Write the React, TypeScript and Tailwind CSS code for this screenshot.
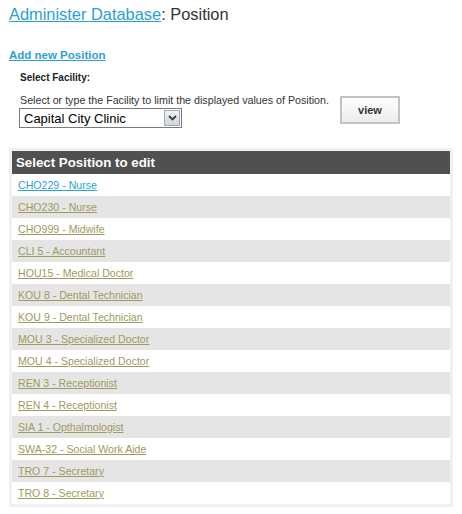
const positions = [
  "CHO229 - Nurse",
  "CHO230 - Nurse",
  "CHO999 - Midwife",
  "CLI 5 - Accountant",
  "HOU15 - Medical Doctor",
  "KOU 8 - Dental Technician",
  "KOU 9 - Dental Technician",
  "MOU 3 - Specialized Doctor",
  "MOU 4 - Specialized Doctor",
  "REN 3 - Receptionist",
  "REN 4 - Receptionist",
  "SIA 1 - Opthalmologist",
  "SWA-32 - Social Work Aide",
  "TRO 7 - Secretary",
  "TRO 8 - Secretary",
];

function FacilitySelect() {
  return (
    <div className="flex h-[20px] w-[163px] items-center border border-[#7a7a7a] bg-white pl-[4px] pr-[1px]">
      <span className="flex-1 text-[13px] leading-none text-black">Capital City Clinic</span>
      <span className="flex h-[16px] w-[16px] items-center justify-center border border-[#a5a9b4] bg-gradient-to-b from-[#f2f3f6] to-[#cfd3dc]">
        <svg width="9" height="6" viewBox="0 0 9 6">
          <path d="M1 1 L4.5 4.5 L8 1" fill="none" stroke="#3d3d3d" strokeWidth="1.8" />
        </svg>
      </span>
    </div>
  );
}

export default function App() {
  return (
    <div className="min-h-[514px] bg-white px-[9px] pt-[4px] font-['Liberation_Sans',Arial,sans-serif] text-[#333]">
      {/* Page title */}
      <h1 className="text-[16.4px] leading-[20px]">
        <a href="#" className="text-[#2a9fd8] underline">Administer Database</a>
        <span className="text-[#333]">: Position</span>
      </h1>

      <div className="mt-[23px] text-[11.5px] font-bold leading-[16px]">
        <a href="#" className="text-[#2a9fd8] underline">Add new Position</a>
      </div>

      {/* Facility filter */}
      <div className="pl-[11px]">
        <div className="mt-[8px] text-[10px] font-bold leading-[14px] text-[#222]">Select Facility:</div>
        <div className="mt-[8px] flex items-start">
          <div className="w-[320px]">
            <div className="whitespace-nowrap text-[10.7px] leading-[14px] text-[#333]">
              Select or type the Facility to limit the displayed values of Position.
            </div>
            <div className="-ml-[1px] mt-[1px]">
              <FacilitySelect />
            </div>
          </div>
          <button className="mt-[3px] h-[28px] w-[60px] border-2 border-[#c3c3c3] bg-gradient-to-b from-white to-[#ececec] text-[11px] font-bold text-[#333]">
            view
          </button>
        </div>
      </div>

      {/* Position list */}
      <div className="mt-[20px] bg-[#f1f1f1] p-[3px]">
        <div className="flex h-[23px] items-center bg-[#505050] pl-[4px] text-[13.3px] font-bold text-white">
          Select Position to edit
        </div>
        {positions.map((p, i) => (
          <div
            key={p}
            className={`flex h-[22px] items-center pl-[6px] pt-[1px] text-[10.6px] ${i % 2 === 1 ? "bg-[#e5e5e5]" : "bg-white"}`}
          >
            <a href="#" className={`underline ${i === 0 ? "text-[#2a9fd8]" : "text-[#a09a5c]"}`}>
              {p}
            </a>
          </div>
        ))}
      </div>
    </div>
  );
}
